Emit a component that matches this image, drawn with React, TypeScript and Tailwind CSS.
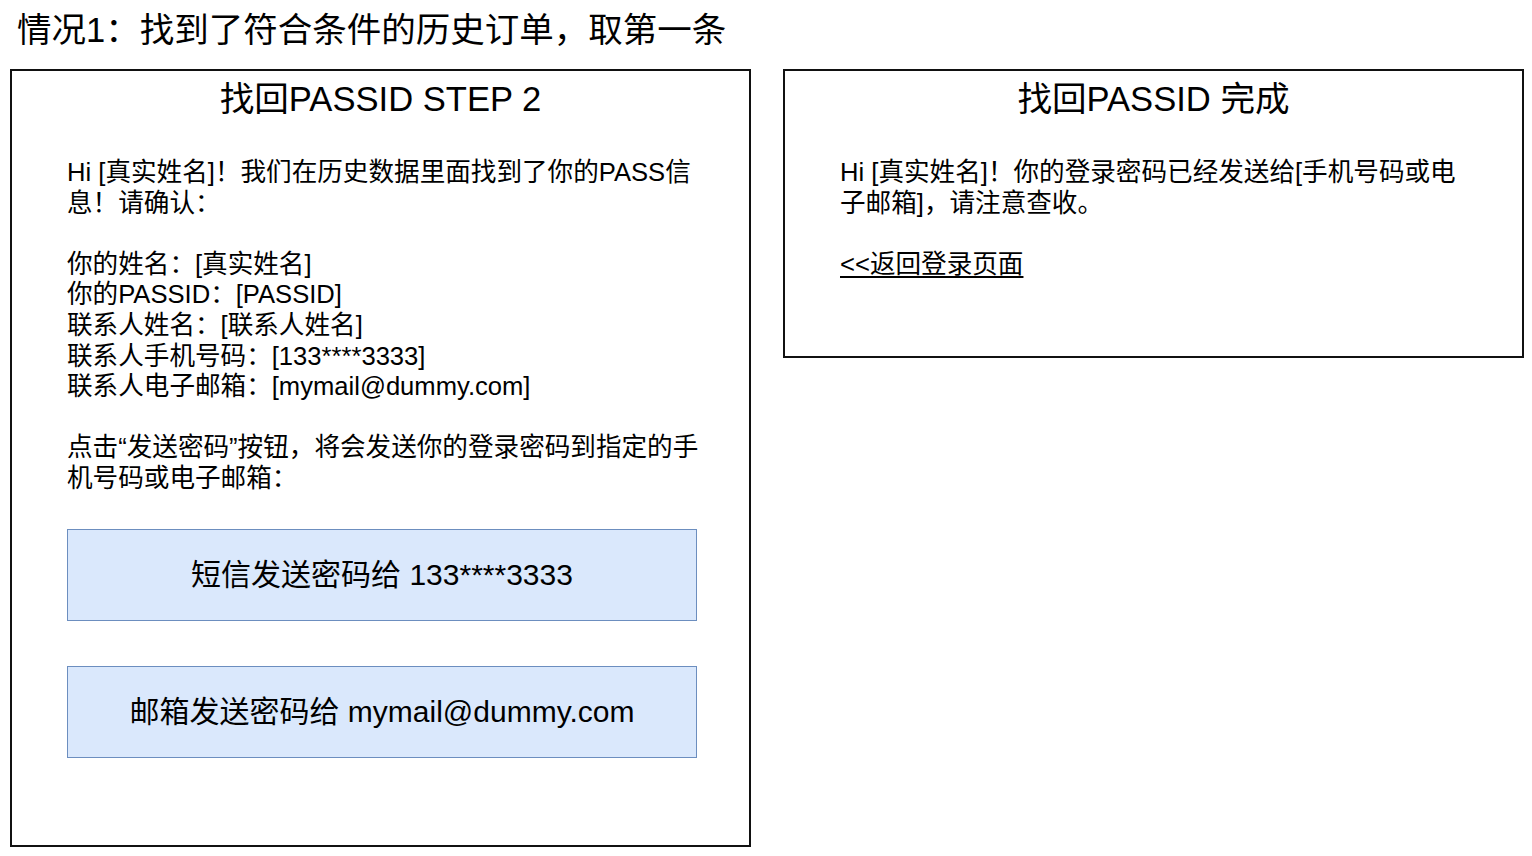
const font = "[font-family:'Liberation_Sans','Noto_Sans_CJK_SC',sans-serif]";

function Line({ children }: { children?: React.ReactNode }) {
  return <div className="h-[30.6px] whitespace-nowrap">{children}</div>;
}

function SendButton({ label }: { label: string }) {
  return (
    <div className="flex h-[92px] w-[630px] items-center justify-center border border-[#6c8ebf] bg-[#dae8fc] text-[30px]">
      {label}
    </div>
  );
}

export default function App() {
  return (
    <div className={`min-h-[856px] w-[1532px] bg-white pl-[10px] pt-[10px] text-black ${font}`}>
      <h1 className="ml-[7px] h-[41px] text-[34.5px] leading-[41px] font-normal">
        情况1：找到了符合条件的历史订单，取第一条
      </h1>
      <div className="mt-[18px] flex items-start gap-[32px]">
        {/* step 2 */}
        <div className="flex h-[778px] w-[741px] flex-col border-2 border-[#111] pl-[55px] pt-[8px]">
          <div className="-ml-[55px] h-[41px] text-center text-[34.6px] leading-[41px]">找回PASSID STEP 2</div>
          <div className="mt-[37px] text-[25.6px] leading-[30.6px]">
            <Line>Hi [真实姓名]！我们在历史数据里面找到了你的PASS信</Line>
            <Line>息！请确认：</Line>
            <Line />
            <Line>你的姓名：[真实姓名]</Line>
            <Line>你的PASSID：[PASSID]</Line>
            <Line>联系人姓名：[联系人姓名]</Line>
            <Line>联系人手机号码：[133****3333]</Line>
            <Line>联系人电子邮箱：[mymail@dummy.com]</Line>
            <Line />
            <Line>点击“发送密码”按钮，将会发送你的登录密码到指定的手</Line>
            <Line>机号码或电子邮箱：</Line>
          </div>
          <div className="mt-[35px] flex flex-col gap-[45px]">
            <SendButton label="短信发送密码给 133****3333" />
            <SendButton label="邮箱发送密码给 mymail@dummy.com" />
          </div>
        </div>

        {/* done */}
        <div className="flex h-[289px] w-[741px] flex-col border-2 border-[#111] pl-[55px] pt-[8px]">
          <div className="-ml-[55px] h-[41px] text-center text-[34.6px] leading-[41px]">找回PASSID 完成</div>
          <div className="mt-[37px] text-[25.6px] leading-[30.6px]">
            <Line>Hi [真实姓名]！你的登录密码已经发送给[手机号码或电</Line>
            <Line>子邮箱]，请注意查收。</Line>
            <Line />
            <Line>
              <a href="#" className="underline underline-offset-[3px]">&lt;&lt;返回登录页面</a>
            </Line>
          </div>
        </div>
      </div>
    </div>
  );
}
